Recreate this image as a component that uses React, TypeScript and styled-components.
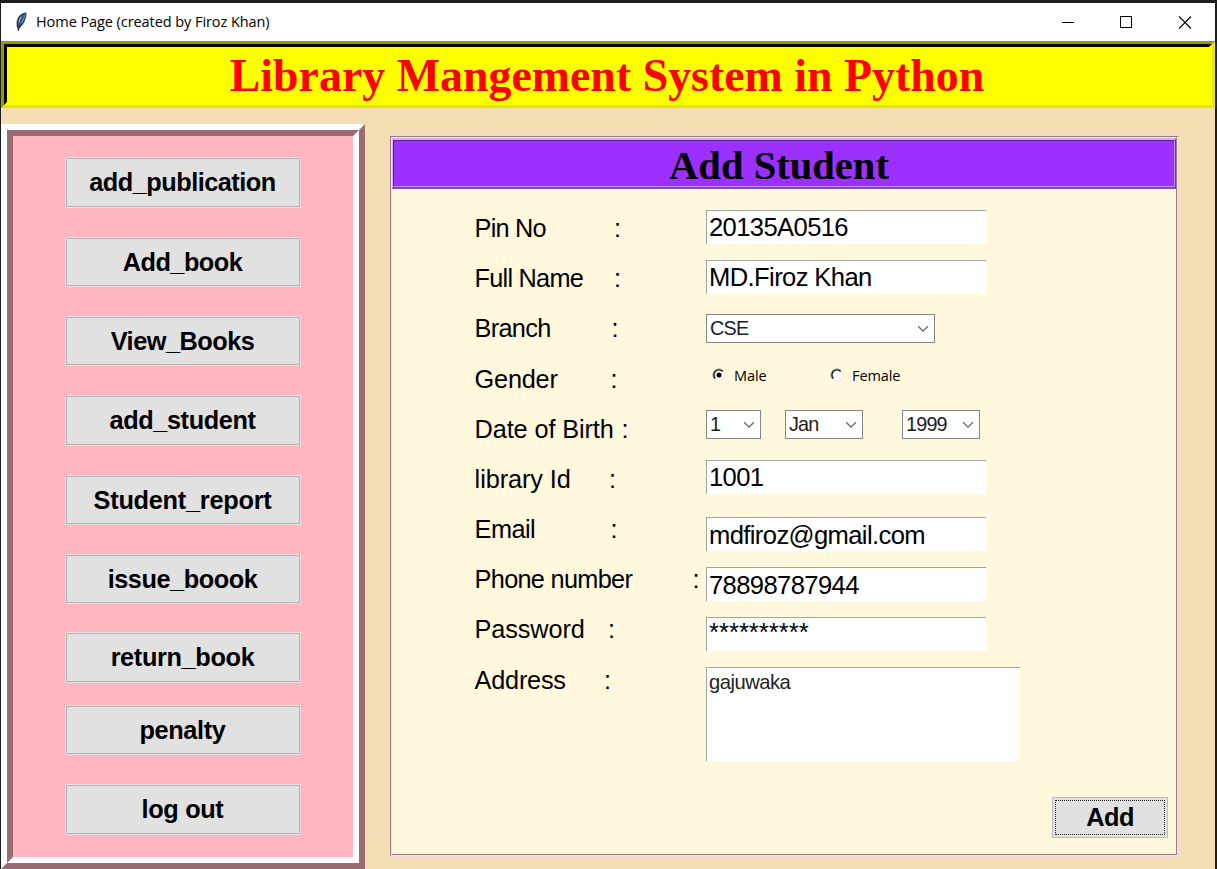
import React from "react";
import styled, { createGlobalStyle } from "styled-components";

const Global = createGlobalStyle`
  * { box-sizing: border-box; }
  body { margin: 0; background: #1d1d1d; overflow: hidden; }
`;

const sans = `"Liberation Sans", Arial, sans-serif`;
const serif = `"Liberation Serif", "Times New Roman", serif`;
const ui = `"Open Sans", "Noto Sans", sans-serif`;

const Desktop = styled.div`
  width: 1217px;
  height: 869px;
  padding: 3px 2px 0 1px;
  background: #1d1d1d;
`;

const Window = styled.div`
  display: flex;
  flex-direction: column;
  height: 866px;
  background: #f5deb3;
  color: #000;
  overflow: hidden;
`;

const TitleBar = styled.header`
  display: flex;
  align-items: center;
  height: 38px;
  flex: none;
  padding-left: 13px;
  background: #fff;
`;

const WindowTitle = styled.span`
  flex: 1;
  margin-left: 8px;
  font: 14.5px/20px ${ui};
  letter-spacing: -0.07px;
  white-space: pre;
`;

const WindowControls = styled.div`
  display: flex;
  gap: 46px;
  margin-right: 23px;
`;

const Banner = styled.div`
  height: 67px;
  flex: none;
  border: 3px solid;
  border-color: #999900 #e5e500 #e5e500 #999900;
`;

const BannerInner = styled.h1`
  height: 100%;
  margin: 0;
  padding: 1px 2px 0 0;
  border: 3px solid;
  border-color: #000 #ff0 #ff0 #000;
  background: #ff0;
  color: #f00;
  font: bold 45.9px/56px ${serif};
  text-align: center;
  white-space: pre;
`;

const Main = styled.div`
  display: flex;
  align-items: flex-start;
  flex: 1;
`;

const Sidebar = styled.nav`
  width: 364px;
  height: 745px;
  margin-top: 16px;
  border: 6px solid;
  border-color: #fff #996c74 #996c74 #fff;
`;

const SidebarInner = styled.div`
  height: 100%;
  padding: 21px 0 0 52px;
  border: 6px solid;
  border-color: #996c74 #fff #fff #996c74;
  background: #ffb6c1;
`;

const NavButton = styled.button<{ $height: number; $gap: number; $tight: number }>`
  display: block;
  width: 236px;
  height: ${(p) => p.$height}px;
  margin: 0 0 ${(p) => p.$gap}px;
  padding: 0 1px 1px 0;
  border: 1px solid #e9dde0;
  outline: 1px solid #b4b4b4;
  outline-offset: -2px;
  background: #e1e1e1;
  color: #000;
  font: bold 25.3px/30px ${sans};
  letter-spacing: ${(p) => -p.$tight}px;
  text-align: center;
`;

const Panel = styled.section`
  display: flex;
  flex-direction: column;
  width: 789px;
  height: 721px;
  margin: 28px 0 0 25px;
  border: solid;
  border-width: 1px 2px 2px 1px;
  border-color: #9f7a84 #eedfda #eedfda #9f7a84;
`;

const PanelInner = styled.div`
  flex: 1;
  display: flex;
  flex-direction: column;
  border: 1px solid;
  border-color: #efe6e3 #a87884 #a87884 #efe6e3;
  background: #fff8dc;
`;

const PanelTitle = styled.h2`
  height: 51px;
  margin: 0;
  border: solid;
  border-width: 2px 1px 2px 1px;
  border-color: #d3aef0 #6a3a9c #7c4bb0 #d5b0ee;
`;

const PanelTitleInner = styled.div`
  height: 100%;
  padding-right: 10px;
  border: 1px solid;
  border-color: #5c2094 #c38af0 #c38af0 #5c2094;
  background: #9b30ff;
  font: bold 40.6px/49px ${serif};
  text-align: center;
  white-space: pre;
`;

const Form = styled.div`
  display: flex;
  padding: 15px 0 0 82px;
`;

const Labels = styled.div`
  width: 232px;
  flex: none;
`;

const Label = styled.div`
  display: flex;
  height: 50.18px;
  padding-left: 0.6px;
  font: 25.3px/48px ${sans};
  white-space: pre;
`;

const LabelText = styled.span<{ $width: number; $tight: number }>`
  width: ${(p) => p.$width}px;
  flex: none;
  letter-spacing: ${(p) => -p.$tight}px;
`;

const Fields = styled.div`
  padding-top: 6px;
`;

const Entry = styled.div<{ $gap: number; $line?: number }>`
  width: 280px;
  height: 34px;
  margin-bottom: ${(p) => p.$gap}px;
  padding-left: 2px;
  border: solid #a3a3a3;
  border-width: 1px 0 0 1px;
  background: #fff;
  font: 25.6px/${(p) => p.$line ?? 34}px ${sans};
  letter-spacing: -0.62px;
`;

const Secret = styled(Entry)`
  line-height: 29px;
  letter-spacing: 0;
`;

const TextArea = styled(Entry)`
  width: 314px;
  height: 94px;
  font-size: 20.2px;
  line-height: 28px;
  letter-spacing: -0.5px;
  color: #222;
`;

const Combo = styled.div<{ $width: number; $right?: number; $below?: number }>`
  display: flex;
  align-items: center;
  justify-content: space-between;
  width: ${(p) => p.$width}px;
  height: 29px;
  margin: 0 ${(p) => p.$right ?? 0}px ${(p) => p.$below ?? 0}px 0;
  padding: 0 5px 0 3px;
  border: 1px solid #858585;
  background: #fff;
  color: #1c1c1c;
  font: 19.8px/27px ${sans};
  letter-spacing: -0.8px;
`;

const Row = styled.div<{ $height: number; $gap: number; $indent?: number }>`
  display: flex;
  align-items: center;
  height: ${(p) => p.$height}px;
  margin-bottom: ${(p) => p.$gap}px;
  padding-left: ${(p) => p.$indent ?? 0}px;
`;

const Radio = styled.label<{ $width: number }>`
  display: flex;
  align-items: center;
  width: ${(p) => p.$width}px;
  gap: 8px;
  font: 14.5px/20px ${ui};
  letter-spacing: -0.1px;
`;

const RadioText = styled.span`
  padding-top: 2px;
`;

const Footer = styled.div`
  display: flex;
  justify-content: flex-end;
  margin-top: auto;
  padding: 0 8px 16px;
`;

const AddButton = styled.button`
  width: 116px;
  height: 41px;
  padding: 2px;
  border: 1px solid #bcbcc0;
  background: #e1e1e1;
  font: bold 25.3px/33px ${sans};
  letter-spacing: -0.5px;
  color: #000;
`;

const FocusRing = styled.span`
  display: block;
  height: 35px;
  border: 1px dotted #222;
`;

const Chevron = () => (
  <svg width="12" height="8" viewBox="0 0 12 8" fill="none" stroke="#707070" strokeWidth="1.3">
    <path d="M1 1.2 6 6 11 1.2" />
  </svg>
);

const Feather = () => (
  <svg width="14" height="20" viewBox="0 0 14 20">
    <path d="M12.4.6C8.4.8 4.6 3.6 3.3 7.4 2.2 10.7 2.2 13.5 3.4 16L4.4 19.6 5.6 16C9.6 12.7 13 6.3 12.4.6Z" fill="#2b3646" />
    <path d="M11.4 1.8C8 3 5.6 5.6 4.7 9.3L4.3 14.3C7.6 12.6 11.6 7.2 11.4 1.8Z" fill="#4f83c4" />
    <path d="M10 3.4C7.1 7 5.2 11.2 4.3 19" fill="none" stroke="#1b222d" strokeWidth=".8" />
    <path d="M6.5 5.2C5.6 7 5.2 8.6 5.1 10.2" fill="none" stroke="#a9c8ea" strokeWidth=".9" />
    <path d="M2.6 8.5 2.4 14.6" stroke="#bbb" strokeWidth=".9" />
  </svg>
);

const RadioMark = ({ on }: { on?: boolean }) => (
  <svg width="14" height="14" viewBox="0 0 14 14" fill="none">
    <circle cx="7" cy="7" r="6" fill="#fff" stroke="#ece5d0" />
    <path d="M2.7 11.2A6 6 0 0 1 11.2 2.7" stroke="#999" />
    <path d="M3.4 10.5A5 5 0 0 1 10.6 3.4" stroke="#111" strokeWidth="1.4" />
    {on && <circle cx="7" cy="7" r="2.5" fill="#000" />}
  </svg>
);

const navItems: [string, number, number, number][] = [
  ["add_publication", 51, 29, 0.5],
  ["Add_book", 50, 29, 0.5],
  ["View_Books", 50, 29, 0.5],
  ["add_student", 51, 29, 0.4],
  ["Student_report", 50, 29, 0.25],
  ["issue_boook", 50, 28, 0.45],
  ["return_book", 51, 22, 0.35],
  ["penalty", 50, 29, 0.35],
  ["log out", 51, 0, 0.35],
];

const labels: [string, number, number][] = [
  ["Pin No", 139.5, 0.77],
  ["Full Name", 139.5, 0.76],
  ["Branch", 137, 0.7],
  ["Gender", 136, 0.22],
  ["Date of Birth", 147, 0.12],
  ["library Id", 134.5, 0.08],
  ["Email", 136, 0.54],
  ["Phone number", 218, 0.7],
  ["Password", 133.5, 0.13],
  ["Address", 129.5, 0.23],
];

export default function App() {
  return (
    <Desktop>
      <Global />
      <Window>
        <TitleBar>
          <Feather />
          <WindowTitle>Home Page (created by Firoz Khan)</WindowTitle>
          <WindowControls>
            <svg width="13" height="13" stroke="#000" fill="none"><path d="M1 6.5H13" /></svg>
            <svg width="13" height="13" stroke="#000" fill="none"><rect x=".5" y=".5" width="11" height="11" /></svg>
            <svg width="13" height="13" stroke="#000" fill="none"><path d="M0 .5 12 12.5M12 .5 0 12.5" strokeWidth="1.2" /></svg>
          </WindowControls>
        </TitleBar>
        <Banner>
          <BannerInner>Library Mangement System in Python</BannerInner>
        </Banner>
        <Main>
          <Sidebar>
            <SidebarInner>
              {navItems.map(([text, height, gap, tight]) => (
                <NavButton key={text} $height={height} $gap={gap} $tight={tight}>{text}</NavButton>
              ))}
            </SidebarInner>
          </Sidebar>
          <Panel>
            <PanelInner>
              <PanelTitle>
                <PanelTitleInner>Add Student</PanelTitleInner>
              </PanelTitle>
              <Form>
                <Labels>
                  {labels.map(([text, width, tight]) => (
                    <Label key={text}>
                      <LabelText $width={width} $tight={tight}>{text}</LabelText>:
                    </Label>
                  ))}
                </Labels>
                <Fields>
                  <Entry $gap={16} $line={32}>20135A0516</Entry>
                  <Entry $gap={20} $line={32}>MD.Firoz Khan</Entry>
                  <Combo $width={229} $below={17}>CSE<Chevron /></Combo>
                  <Row $height={30} $gap={20} $indent={6}>
                    <Radio $width={118}><RadioMark on /><RadioText>Male</RadioText></Radio>
                    <Radio $width={90}><RadioMark /><RadioText>Female</RadioText></Radio>
                  </Row>
                  <Row $height={29} $gap={21}>
                    <Combo $width={55} $right={24}>1<Chevron /></Combo>
                    <Combo $width={78} $right={39}>Jan<Chevron /></Combo>
                    <Combo $width={78}>1999<Chevron /></Combo>
                  </Row>
                  <Entry $gap={23} $line={32}>1001</Entry>
                  <Entry $gap={16}>mdfiroz@gmail.com</Entry>
                  <Entry $gap={16}>78898787944</Entry>
                  <Secret $gap={16}>**********</Secret>
                  <TextArea $gap={0}>gajuwaka</TextArea>
                </Fields>
              </Form>
              <Footer>
                <AddButton><FocusRing>Add</FocusRing></AddButton>
              </Footer>
            </PanelInner>
          </Panel>
        </Main>
      </Window>
    </Desktop>
  );
}
